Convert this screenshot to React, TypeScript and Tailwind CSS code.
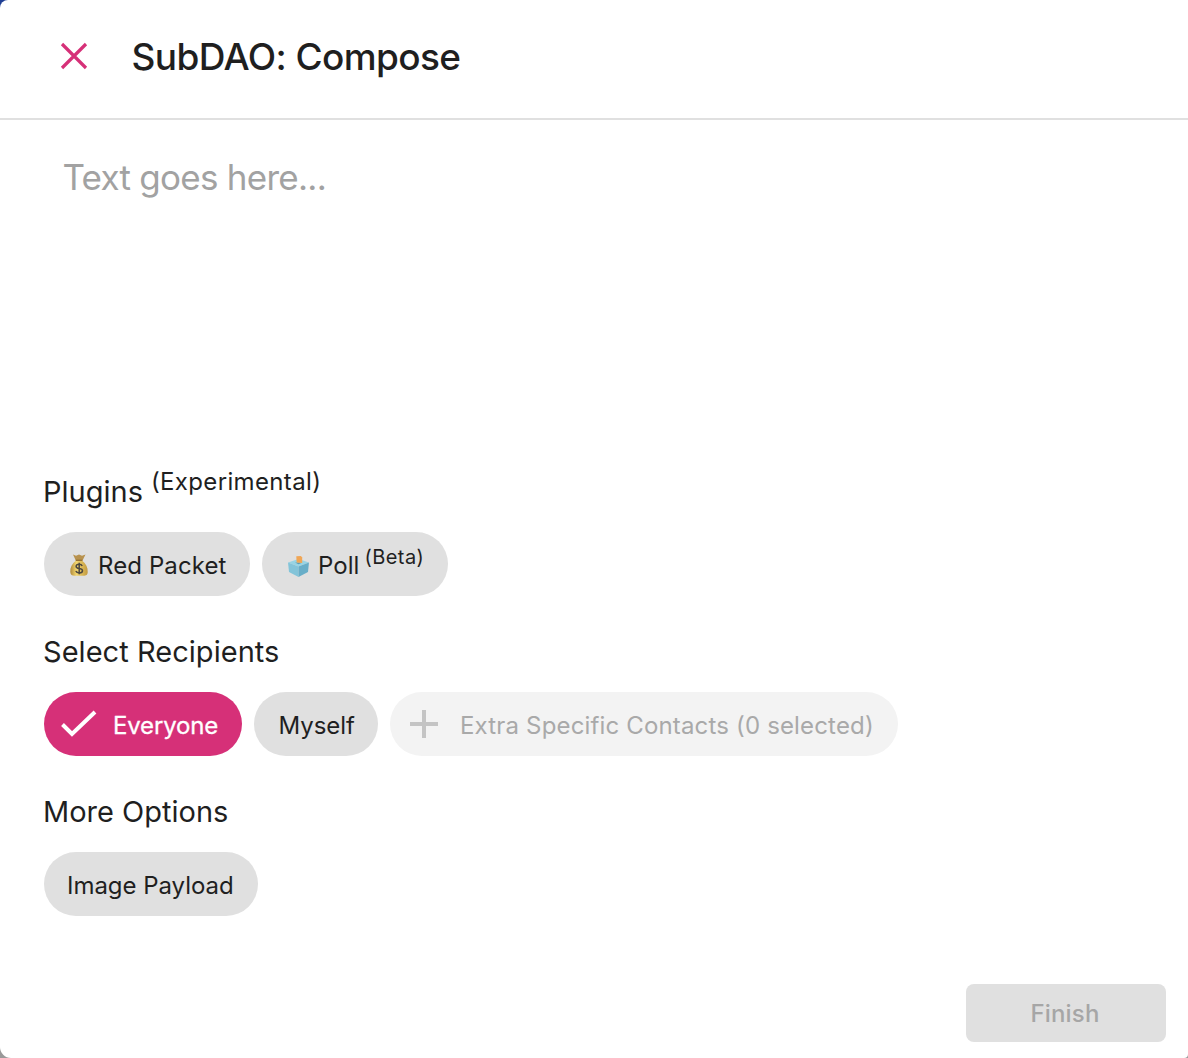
import type { ReactNode } from "react";

function Chip({ className, children }: { className: string; children: ReactNode }) {
  return (
    <button className={`flex h-16 items-center whitespace-nowrap rounded-full text-[24px] leading-8 ${className}`}>
      {children}
    </button>
  );
}

function MoneyBag() {
  return (
    <svg className="mt-0.5 size-6 shrink-0" viewBox="0 0 24 24">
      <defs>
        <linearGradient id="bag" x1="0" x2="1">
          <stop offset="0" stopColor="#b08a3a" />
          <stop offset=".35" stopColor="#f2d56e" />
          <stop offset="1" stopColor="#c29a40" />
        </linearGradient>
      </defs>
      <path d="M6 1.500l3 1.200L12 1.500l3 1.200 3.500-1.200L15.300 8H9z" fill="#b8924e" />
      <path d="M9 7.500h6c4 3 6 7 5.700 11.500 0 3-1.700 3.700-4 3.700H7.500c-2.500 0-4-.7-4.200-3.700C3 14.500 5 10.500 9 7.500z" fill="url(#bag)" />
      <path d="M8.800 7.300h6.500" stroke="#96702f" strokeWidth="1.300" />
      <path d="M15.200 13c-.5-1.200-1.600-1.800-3-1.800-1.800 0-3.100.8-3.100 2.200 0 3 6.400 1.300 6.400 4.300 0 1.400-1.400 2.200-3.200 2.200-1.700 0-3-.7-3.400-2M12.200 9.700v11.600" fill="none" stroke="#4b4740" strokeWidth="1.500" />
    </svg>
  );
}

function BallotBox() {
  return (
    <svg className="mt-1 size-6 shrink-0" viewBox="0 0 24 24">
      <path d="M2 8.500L12.500 5 23 8.500 12.500 12.500z" fill="#98d4e4" />
      <path d="M2 8.500L12.500 12.500V23L3 18z" fill="#83c4d9" />
      <path d="M23 8.500L12.500 12.500V23l9.500-5z" fill="#68aec8" />
      <path d="M9 8.500l7 .2-3.500 1.500z" fill="#5e9db1" />
      <path d="M10.300 2.300l4.600-.3 1.300 1.500V9l-5.500-.5z" fill="#f0a656" />
    </svg>
  );
}

export default function App() {
  return (
    <div className="h-[1058px] w-full bg-[linear-gradient(180deg,#1f3f94_0_50%,#999_50%)] font-['Inter',sans-serif] text-[#1f1f1f]">
      <div className="flex h-full flex-col overflow-hidden rounded-bl-[11px] rounded-br-[4px] rounded-tl-[8px] bg-white">
        <header className="flex h-[120px] shrink-0 items-center border-b-2 border-[#e0e0e0] pb-1.5 pl-[60px]">
          <svg className="size-7 text-[#d63078]" viewBox="0 0 28 28" fill="none" stroke="currentColor" strokeWidth="3.200">
            <path d="M2 2l24 24M26 2L2 26" />
          </svg>
          <h1 className="ml-[43.500px] mt-0.5 text-[37px] font-medium leading-[48px] tracking-[-0.600px]">SubDAO: Compose</h1>
        </header>
        <textarea
          className="mt-[31px] h-[300px] shrink-0 resize-none px-[62.500px] text-[35px] leading-[52px] tracking-[-0.740px] outline-none placeholder:text-[#a2a2a2]"
          placeholder="Text goes here..."
        />
        <main className="mt-px flex flex-col pl-11">
          <h2 className="-ml-px flex h-20 items-center text-[29px]">
            <span>Plugins</span>
            <span className="mb-5 ml-2 text-[24px] tracking-[0.350px]">(Experimental)</span>
          </h2>
          <div className="flex gap-3">
            <Chip className="w-[206px] bg-[#e0e0e0] pl-[23px]">
              <MoneyBag />
              <span className="ml-[7px] mt-1 tracking-[0.100px]">Red Packet</span>
            </Chip>
            <Chip className="w-[186px] bg-[#e0e0e0] pl-6">
              <BallotBox />
              <span className="ml-2 mt-1 tracking-[0.050px]">Poll</span>
              <span className="mb-3.5 ml-[5px] text-[20px] tracking-[0.450px]">(Beta)</span>
            </Chip>
          </div>
          <h2 className="-ml-px mt-7 flex h-[68px] items-center pb-3 text-[29px] tracking-[0.040px]">Select Recipients</h2>
          <div className="flex gap-3">
            <Chip className="w-[198px] bg-[#d63078] pl-[17px] text-white">
              <svg className="h-7 w-9" viewBox="0 0 36 28" fill="none" stroke="currentColor" strokeWidth="4">
                <path d="M1.500 14.500l9.500 9.500L34 2" />
              </svg>
              <span className="ml-4 mt-1 tracking-[-0.170px] [-webkit-text-stroke:0.3px_white]">Everyone</span>
            </Chip>
            <Chip className="w-[124px] bg-[#e0e0e0] pl-[24.500px]">
              <span className="mt-1 tracking-[-0.050px]">Myself</span>
            </Chip>
            <Chip className="w-[508px] bg-[#f3f3f3] pl-5 text-[#a9a9a9]">
              <svg className="size-7 text-[#c4c4c4]" viewBox="0 0 28 28" fill="currentColor">
                <path d="M12 0h4v12h12v4H16v12h-4V16H0v-4h12z" />
              </svg>
              <span className="ml-[22px] mt-1 tracking-[0.160px]">Extra Specific Contacts (0 selected)</span>
            </Chip>
          </div>
          <h2 className="-ml-px mt-7 flex h-[68px] items-center pb-3 text-[29px]">More Options</h2>
          <Chip className="w-[214px] bg-[#e0e0e0] pl-[23px]">
            <span className="mt-1 tracking-[-0.030px]">Image Payload</span>
          </Chip>
        </main>
        <footer className="mt-auto flex justify-end pb-4 pr-[22px]">
          <button className="h-[58px] w-[200px] rounded-lg bg-[#e0e0e0] pr-0.5 pt-0.5 text-[24px] font-medium tracking-[0.200px] text-[#a6a6a6]">
            Finish
          </button>
        </footer>
      </div>
    </div>
  );
}
